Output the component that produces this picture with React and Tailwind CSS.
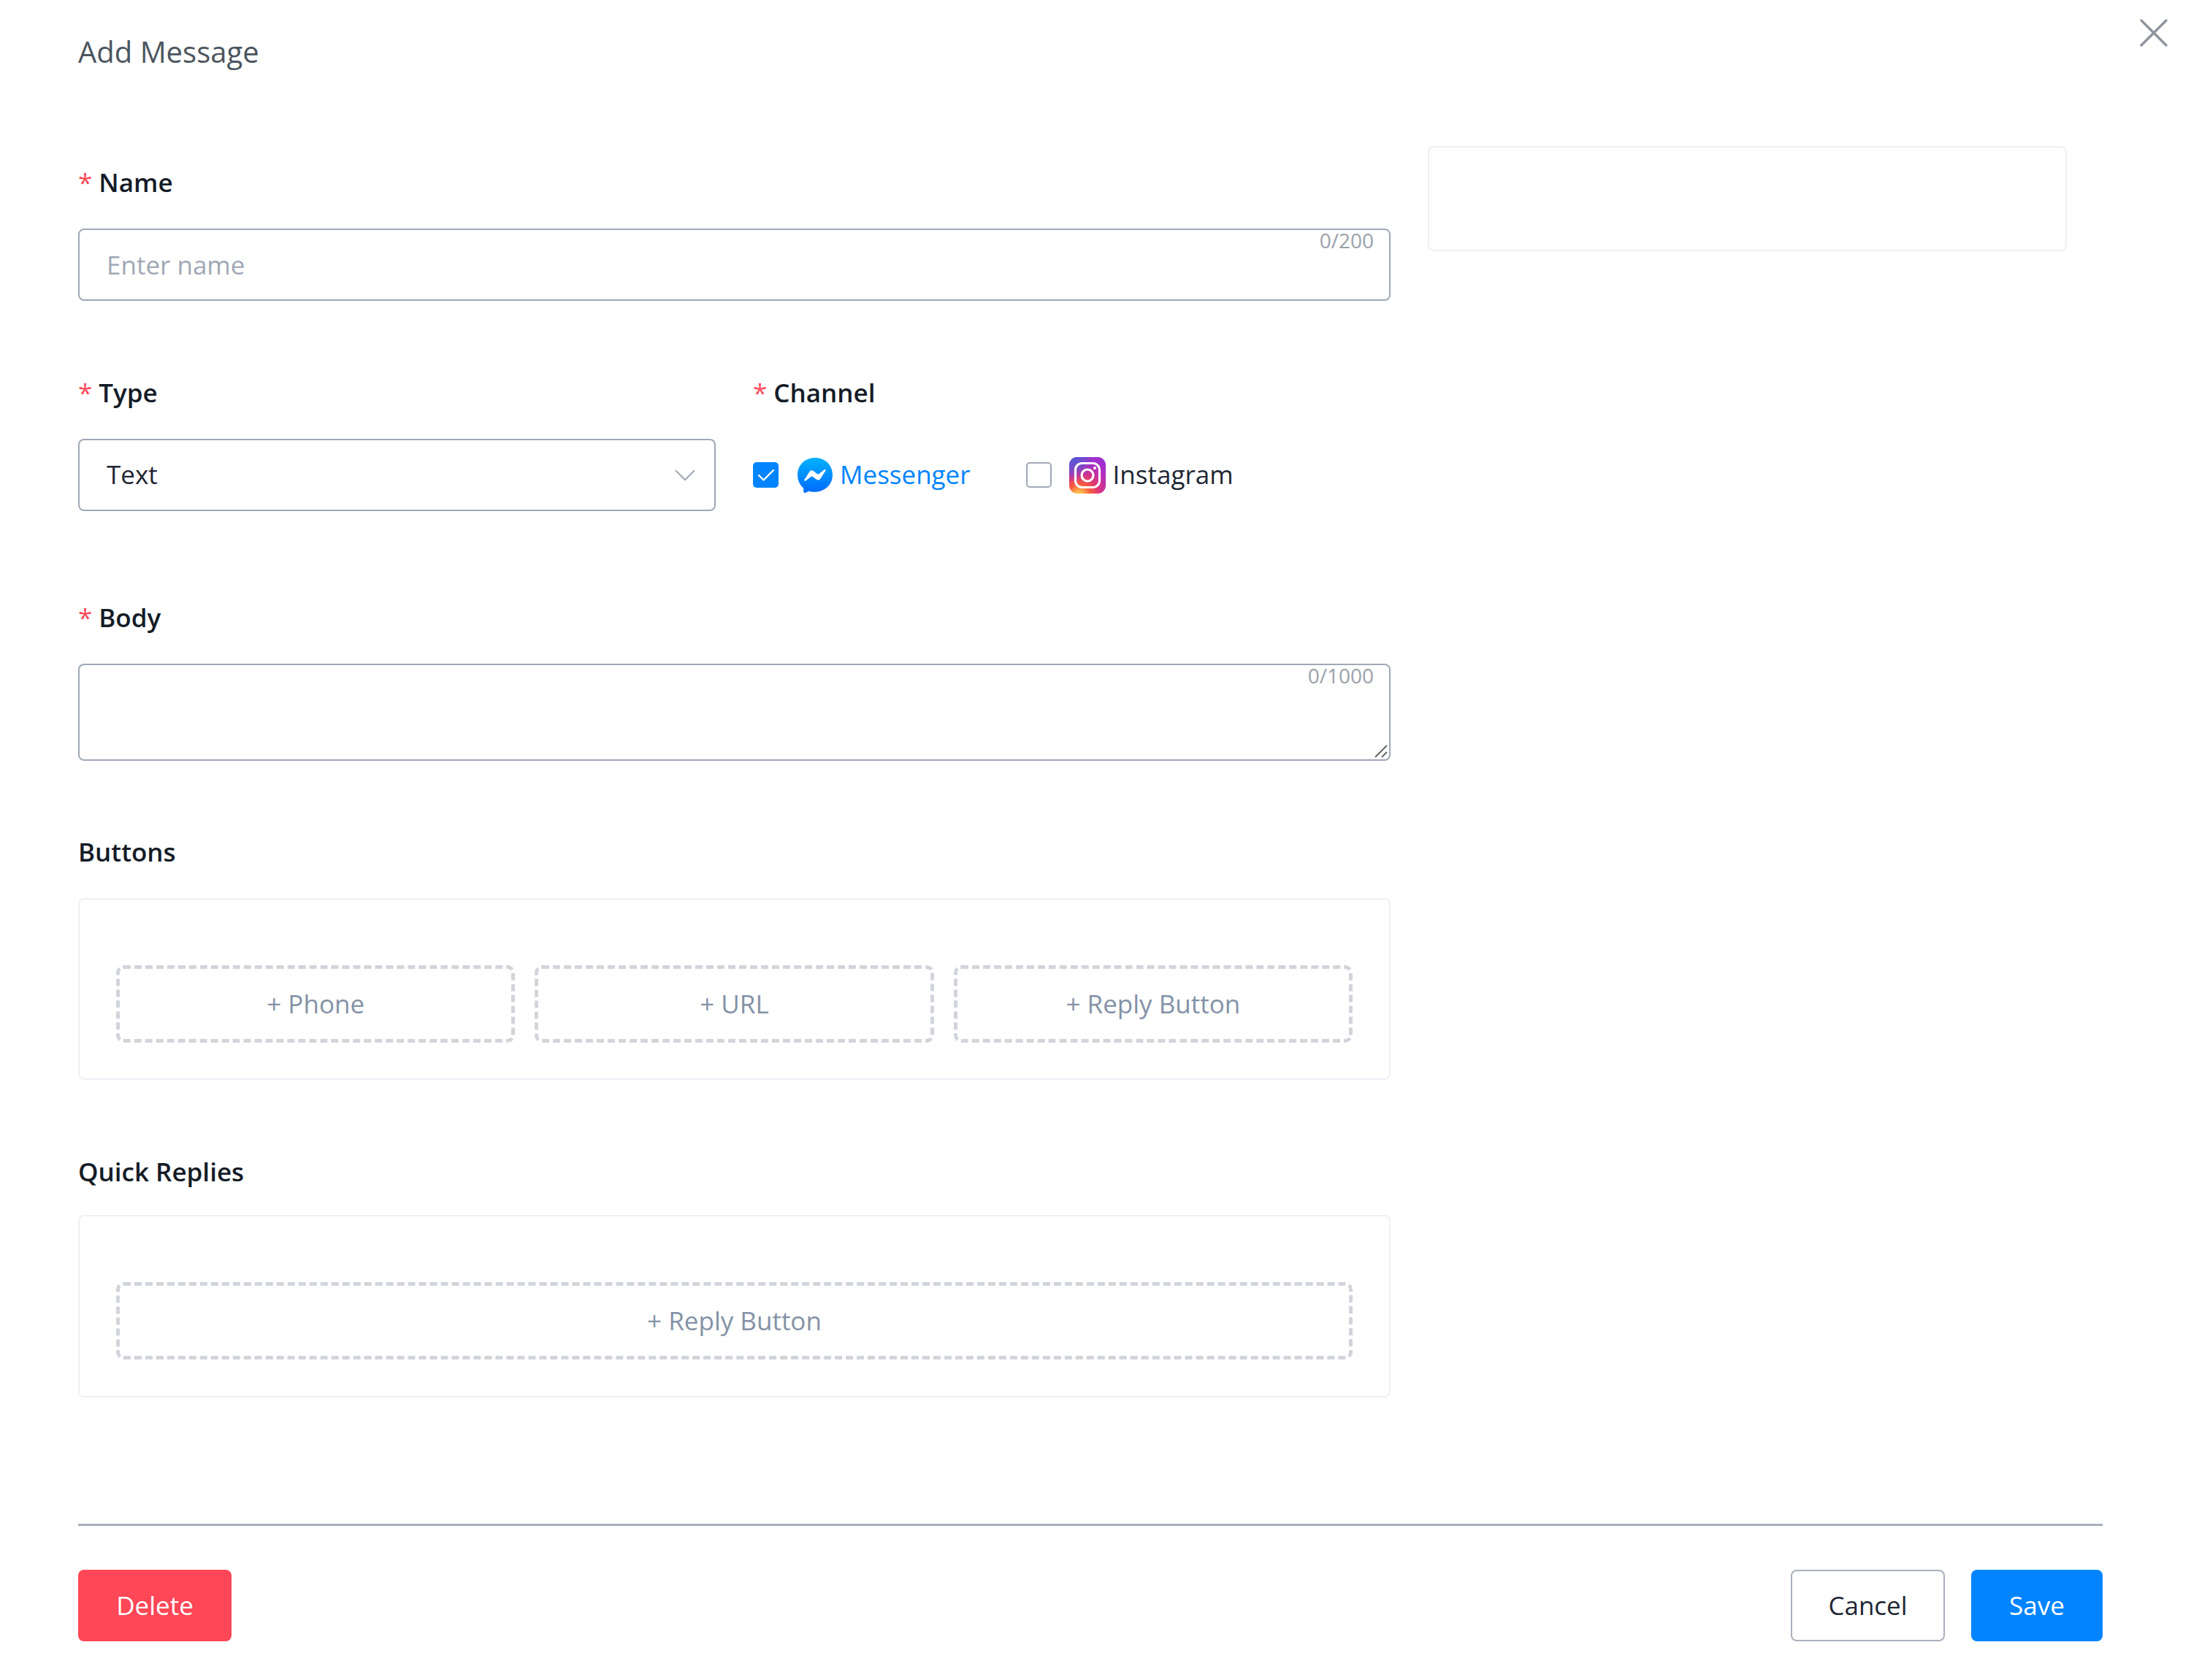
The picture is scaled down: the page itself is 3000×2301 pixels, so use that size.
import { ChevronDown } from "lucide-react";

const Label = ({ children, required, className = "" }) => (
  <div className={`h-[60px] flex items-center text-[35px] font-semibold text-[#141c27] ${className}`}>
    {required && <span className="text-[#ff4757] font-normal mr-[9px]">*</span>}
    {children}
  </div>
);

const AddButton = ({ children }) => (
  <button className="flex-1 h-[106px] border-[5px] border-dashed border-[#d1d5db] rounded-[10px] text-[35px] text-[#8492a6]">
    {children}
  </button>
);

const Checkbox = ({ checked }) =>
  checked ? (
    <div className="w-[35px] h-[35px] rounded-[5px] bg-[#0084ff] flex items-center justify-center">
      <svg width="24" height="20" viewBox="0 0 24 20" fill="none">
        <path d="M2 10l6.5 6.5L22 3" stroke="#fff" strokeWidth="2.4" strokeLinecap="round" strokeLinejoin="round" />
      </svg>
    </div>
  ) : (
    <div className="w-[35px] h-[35px] rounded-[5px] bg-white border-[2.5px] border-[#a0a8b6]" />
  );

const MessengerIcon = () => (
  <svg width="50" height="50" viewBox="0 0 24 24">
    <defs>
      <linearGradient id="msg" x1="0.5" y1="0" x2="0.5" y2="1">
        <stop offset="0" stopColor="#00b2ff" />
        <stop offset="1" stopColor="#006aff" />
      </linearGradient>
    </defs>
    <path
      fill="url(#msg)"
      d="M12 .5C5.5.5.5 5.2.5 11.7c0 3.4 1.4 6.3 3.6 8.4.4.3.3.5.4 2.6 0 .6.6 1 1.2.8 2.3-1 2.4-1.1 2.8-1 6.6 1.8 15-2.4 15-10.8C23.5 5.2 18.5.5 12 .5z"
    />
    <path
      fill="#fff"
      d="M5 14.9l3.4-5.3c.6-.9 1.7-1.1 2.5-.5l2.7 2c.3.2.6.2.9 0l3.6-2.8c.5-.4 1.1.2.8.7l-3.4 5.3c-.6.9-1.7 1.1-2.5.5l-2.7-2c-.3-.2-.6-.2-.9 0l-3.6 2.8c-.5.4-1.1-.2-.8-.7z"
    />
  </svg>
);

const InstagramIcon = () => (
  <svg width="50" height="50" viewBox="0 0 50 50">
    <defs>
      <radialGradient id="igA" cx="0.27" cy="1.05" r="1.05">
        <stop offset="0" stopColor="#fdd15b" />
        <stop offset="0.12" stopColor="#fdb14a" />
        <stop offset="0.3" stopColor="#f9593f" />
        <stop offset="0.55" stopColor="#d9347f" />
        <stop offset="0.85" stopColor="#b02cc0" />
        <stop offset="1" stopColor="#a030cc" />
      </radialGradient>
      <radialGradient id="igB" cx="0.05" cy="0" r="0.7">
        <stop offset="0" stopColor="#4f5fd5" />
        <stop offset="0.6" stopColor="#6a4fd0" stopOpacity="0.7" />
        <stop offset="1" stopColor="#a030cc" stopOpacity="0" />
      </radialGradient>
    </defs>
    <rect width="50" height="50" rx="11" fill="url(#igA)" />
    <rect width="50" height="50" rx="11" fill="url(#igB)" />
    <rect x="8.5" y="8.5" width="33" height="33" rx="9" fill="none" stroke="#fff" strokeWidth="3.2" />
    <circle cx="25" cy="25" r="8" fill="none" stroke="#fff" strokeWidth="3.2" />
    <circle cx="35" cy="15" r="2.1" fill="#fff" />
  </svg>
);

const Counter = ({ children }) => (
  <span className="absolute right-[23px] top-[1px] text-[28px] leading-[30px] text-[#9aa0a9]">{children}</span>
);

export default function App() {
  return (
    <div className="relative w-[3000px] h-[2301px] bg-white px-[107px] font-['Open_Sans',sans-serif] overflow-hidden">
      <button className="absolute right-[32px] top-[26px] text-[#8f959e]">
        <svg width="38" height="38" viewBox="0 0 38 38" fill="none">
          <path d="M2 2l34 34M36 2L2 36" stroke="currentColor" strokeWidth="3.4" strokeLinecap="round" />
        </svg>
      </button>

      <div className="h-[142px] flex items-center text-[40px] text-[#4b555e]">Add Message</div>

      <div className="flex gap-[51px] items-start">
        <div className="w-[1797px] shrink-0 pt-[78px]">
          <Label required>Name</Label>
          <div className="relative mt-[33px]">
            <input
              placeholder="Enter name"
              className="w-full h-[99px] border-[2.5px] border-[#a0a8b6] rounded-[8px] px-[37px] text-[35px] text-[#1f2733] placeholder:text-[#a0a8b6] outline-none"
            />
            <Counter>0/200</Counter>
          </div>

          <div className="flex gap-[51px] mt-[96px]">
            <div className="w-[873px]">
              <Label required>Type</Label>
              <div className="mt-[33px] h-[99px] border-[2.5px] border-[#a0a8b6] rounded-[8px] pl-[37px] pr-[15px] flex items-center justify-between text-[35px] text-[#1f2733]">
                Text
                <ChevronDown size={50} strokeWidth={1} className="text-[#a0a8b6]" />
              </div>
            </div>
            <div>
              <Label required>Channel</Label>
              <div className="mt-[33px] h-[99px] flex items-center text-[35px]">
                <Checkbox checked />
                <span className="ml-[25px]"><MessengerIcon /></span>
                <span className="ml-[9px] text-[#0084ff]">Messenger</span>
                <span className="ml-[76px]"><Checkbox /></span>
                <span className="ml-[24px]"><InstagramIcon /></span>
                <span className="ml-[10px] text-[#1f2733]">Instagram</span>
              </div>
            </div>
          </div>

          <Label required className="mt-[116px]">Body</Label>
          <div className="relative mt-[33px] h-[133px]">
            <textarea className="block w-full h-[133px] resize-none border-[2.5px] border-[#a0a8b6] rounded-[8px] px-[37px] py-[16px] text-[35px] outline-none" />
            <Counter>0/1000</Counter>
            <svg className="absolute right-[3px] bottom-[3px]" width="20" height="20" viewBox="0 0 20 20" fill="none">
              <path d="M2 18L18 2M11 18l7-7" stroke="#666" strokeWidth="2" />
            </svg>
          </div>

          <Label className="mt-[95px]">Buttons</Label>
          <div className="mt-[33px] h-[249px] border-[2px] border-[#edf0f5] rounded-[8px] pt-[90px] px-[50px] flex gap-[27px]">
            <AddButton>+ Phone</AddButton>
            <AddButton>+ URL</AddButton>
            <AddButton>+ Reply Button</AddButton>
          </div>

          <Label className="mt-[96px]">Quick Replies</Label>
          <div className="mt-[29px] h-[250px] border-[2px] border-[#edf0f5] rounded-[8px] pt-[90px] px-[50px] flex">
            <AddButton>+ Reply Button</AddButton>
          </div>
        </div>

        <div className="mt-[58px] w-[875px] h-[144px] border-[2px] border-[#edf0f5] rounded-[8px]" />
      </div>

      <div className="mt-[173px] h-[3px] w-[2772px] bg-[#a9b0bd]" />

      <div className="mt-[60px] w-[2772px] flex items-center text-[35px]">
        <button className="w-[210px] h-[98px] rounded-[8px] bg-[#ff4757] text-white">Delete</button>
        <button className="ml-auto w-[211px] h-[98px] rounded-[8px] border-[2.5px] border-[#a9b0bd] text-[#1f2733]">Cancel</button>
        <button className="ml-[36px] w-[180px] h-[98px] rounded-[8px] bg-[#0084ff] text-white">Save</button>
      </div>
    </div>
  );
}
